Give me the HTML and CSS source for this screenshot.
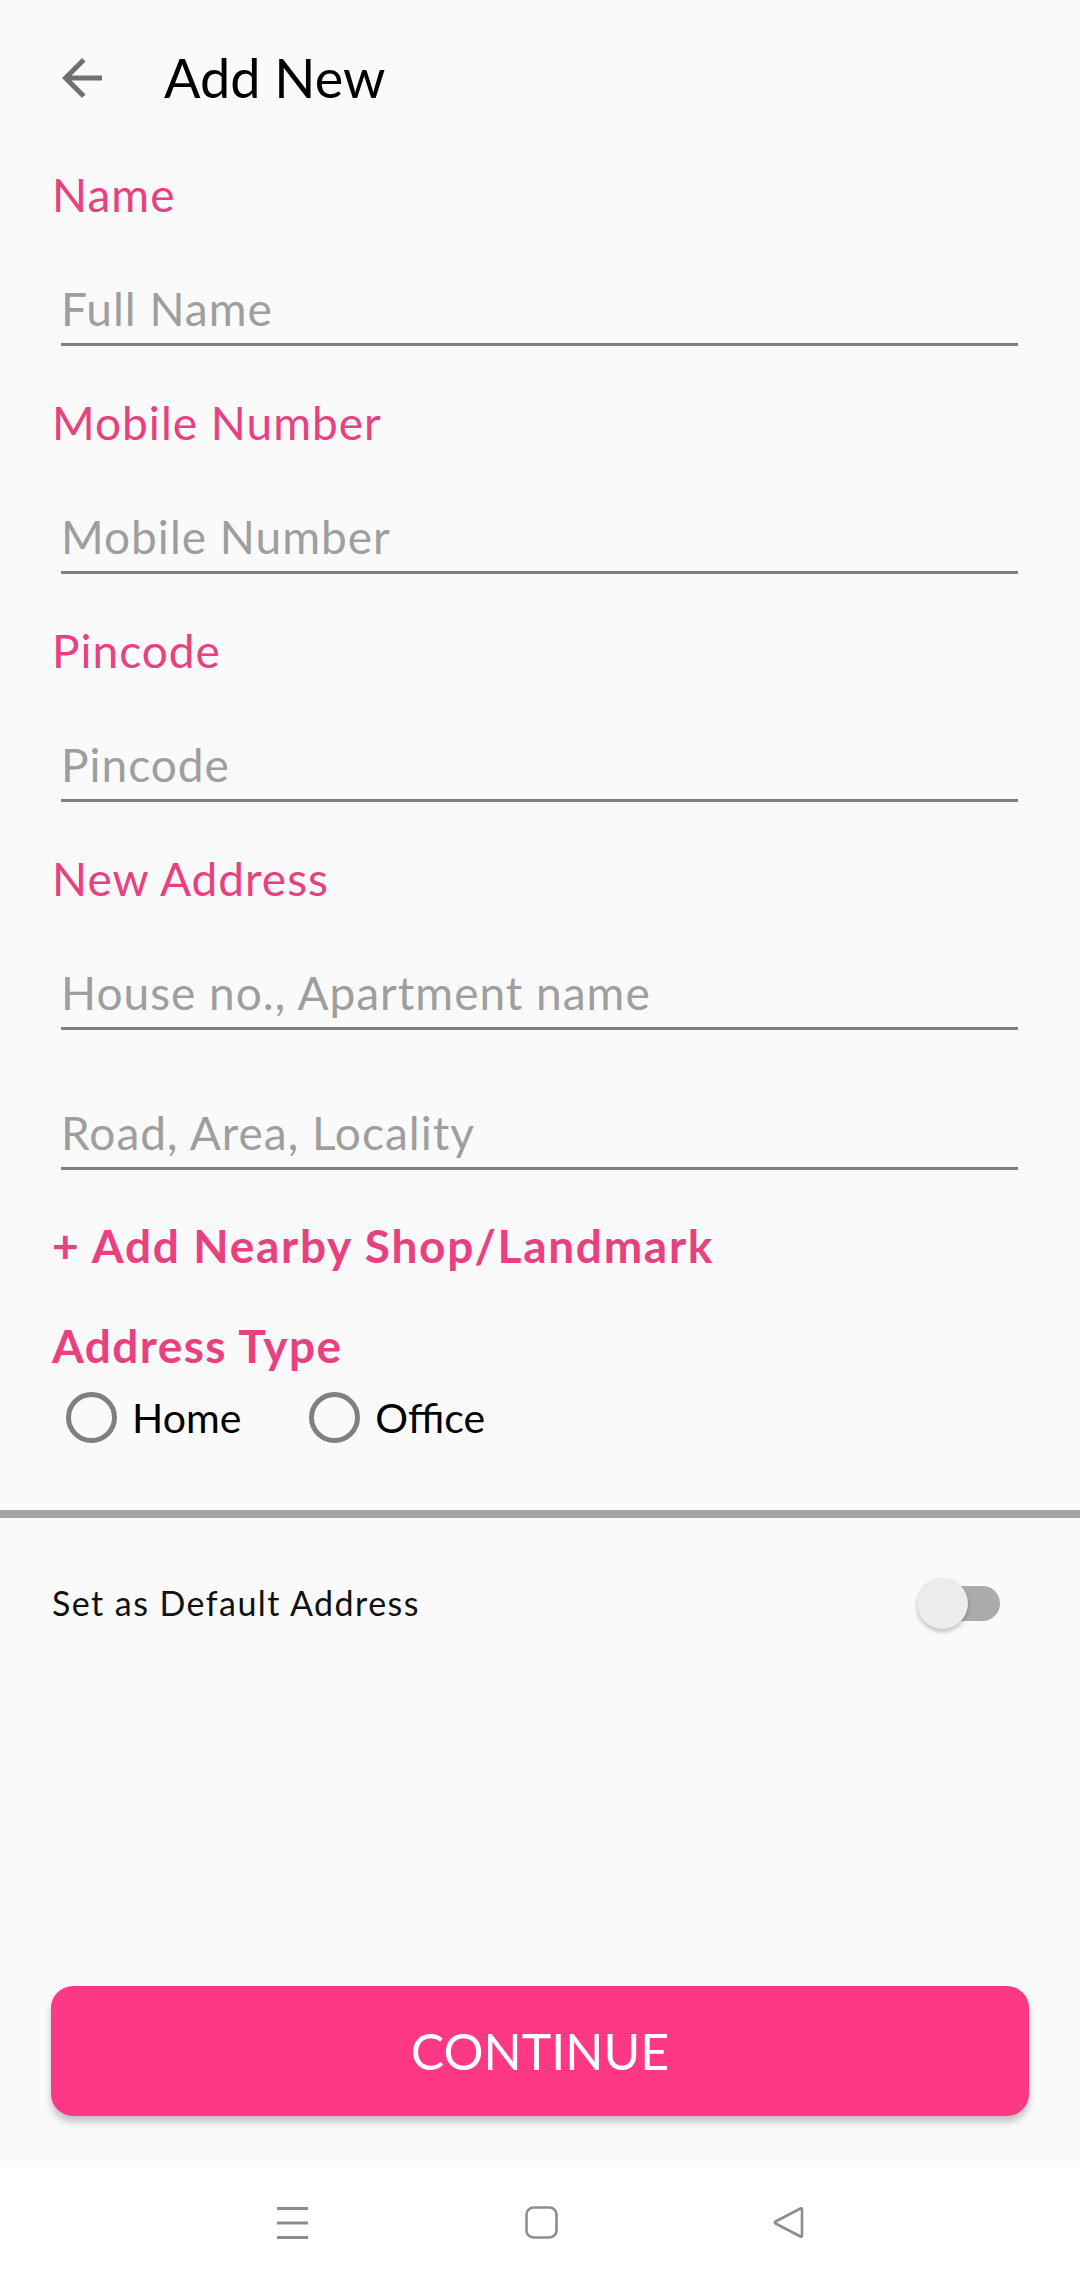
FILE: index.html
```html
<!DOCTYPE html>
<html lang="en">
<head>
<meta charset="utf-8">
<title>Add New</title>
<link rel="stylesheet" href="styles.css">
</head>
<body>
<div class="screen">
  <header class="appbar">
    <svg class="back" viewBox="0 0 24 24" aria-hidden="true"><path d="M20 11H7.830l5.59-5.59L12 4l-8 8 8 8 1.41-1.41L7.83 13H20v-2z" fill="#707070"/></svg>
    <h1 class="title">Add New</h1>
  </header>

  <form class="form">
    <label class="label" for="name">Name</label>
    <input class="field" id="name" type="text" placeholder="Full Name">

    <label class="label" for="mobile">Mobile Number</label>
    <input class="field" id="mobile" type="text" placeholder="Mobile Number">

    <label class="label" for="pin">Pincode</label>
    <input class="field" id="pin" type="text" placeholder="Pincode">

    <label class="label" for="house">New Address</label>
    <input class="field" id="house" type="text" placeholder="House no., Apartment name">
    <input class="field field-next" type="text" placeholder="Road, Area, Locality">

    <div class="landmark">+ Add Nearby Shop/Landmark</div>

    <div class="label label-strong">Address Type</div>
    <div class="radios">
      <div class="radio"><span class="circle"></span><span class="radio-text">Home</span></div>
      <div class="radio"><span class="circle"></span><span class="radio-text">Office</span></div>
    </div>
  </form>

  <div class="divider"></div>

  <div class="default-row">
    <span class="default-text">Set as Default Address</span>
    <span class="switch"><span class="track"></span><span class="thumb"></span></span>
  </div>

  <div class="spacer"></div>

  <div class="button-wrap">
    <button class="continue" type="button">CONTINUE</button>
  </div>

  <nav class="navbar">
    <svg class="nav-icon" width="31" height="32" viewBox="0 0 31 32" aria-hidden="true"><path d="M0 1.5H31M0 16H31M0 30.5H31" stroke="#8d8d8d" stroke-width="3"/></svg>
    <svg class="nav-icon" width="33" height="33" viewBox="0 0 33 33" aria-hidden="true"><rect x="1.5" y="1.5" width="30" height="30" rx="7" fill="none" stroke="#8d8d8d" stroke-width="2.6"/></svg>
    <svg class="nav-icon nav-back" width="32" height="33" viewBox="0 0 32 33" aria-hidden="true"><path d="M28.5 2.5 Q30 1.8 30 3.5 V29.5 Q30 31.2 28.5 30.5 L3.5 17.5 Q2 16.5 3.5 15.5 Z" fill="none" stroke="#8d8d8d" stroke-width="2.6" stroke-linejoin="round"/></svg>
  </nav>
</div>
</body>
</html>
```
FILE: styles.css
```css
* { box-sizing: border-box; }

html, body {
  margin: 0;
  padding: 0;
  background: #fafafa;
}

body {
  font-family: Lato, "Open Sans", "Liberation Sans", sans-serif;
}

.screen {
  width: 1080px;
  height: 2278px;
  display: flex;
  flex-direction: column;
}

.appbar {
  height: 156px;
  flex: none;
  display: flex;
  align-items: center;
  padding-left: 52px;
}

.back {
  width: 60px;
  height: 60px;
  flex: none;
}

.title {
  margin: 0 0 0 52px;
  font-size: 54px;
  line-height: 64px;
  font-weight: 400;
  color: #000;
}

.form {
  flex: none;
  margin: 0;
  padding: 11px 62px 0 52px;
  display: flex;
  flex-direction: column;
}

.label {
  display: block;
  font-size: 46px;
  line-height: 56px;
  letter-spacing: 1px;
  color: #e9407f;
  margin-top: 49px;
}

.form > .label:first-child {
  margin-top: 0;
}

.label-strong {
  font-weight: 700;
  letter-spacing: 1.4px;
  margin-top: 44px;
}

.field {
  display: block;
  width: calc(100% - 9px);
  margin: 57px 0 0 9px;
  height: 66px;
  padding: 0 0 7px 0;
  border: none;
  border-bottom: 3px solid #808080;
  background: transparent;
  font-family: inherit;
  font-size: 46px;
  line-height: 56px;
  letter-spacing: 1px;
  color: #222;
  outline: none;
}

.field::placeholder {
  color: #9e9e9e;
  opacity: 1;
}

.field-next {
  margin-top: 74px;
}

.landmark {
  margin-top: 48px;
  font-size: 46px;
  line-height: 56px;
  font-weight: 700;
  letter-spacing: 1.7px;
  color: #e9407f;
}

.radios {
  margin-top: 18px;
  padding-left: 14px;
  display: flex;
  align-items: center;
  gap: 68px;
  height: 51px;
}

.radio {
  display: flex;
  align-items: center;
  gap: 15px;
}

.circle {
  width: 51px;
  height: 51px;
  border: 5px solid #808080;
  border-radius: 50%;
  flex: none;
}

.radio-text {
  font-size: 41px;
  line-height: 51px;
  color: #000;
}

.divider {
  flex: none;
  margin-top: 67px;
  height: 8px;
  background: #a5a5a5;
}

.default-row {
  flex: none;
  height: 170px;
  padding: 0 80px 0 52px;
  display: flex;
  align-items: center;
  justify-content: space-between;
}

.default-text {
  font-size: 34px;
  line-height: 40px;
  letter-spacing: 1.45px;
  color: #111;
}

.switch {
  position: relative;
  width: 83px;
  height: 51px;
  flex: none;
}

.track {
  position: absolute;
  right: 0;
  top: 8px;
  width: 76px;
  height: 35px;
  border-radius: 18px;
  background: #ababab;
}

.thumb {
  position: absolute;
  left: 0;
  top: 0;
  width: 51px;
  height: 51px;
  border-radius: 50%;
  background: #ececec;
  box-shadow: 0 3px 4px rgba(0, 0, 0, 0.22), 0 0 1px rgba(0, 0, 0, 0.12);
}

.spacer {
  flex: 1;
}

.button-wrap {
  flex: none;
  padding: 0 51px 51px;
}

.continue {
  display: flex;
  align-items: center;
  justify-content: center;
  width: 100%;
  height: 130px;
  border: none;
  border-radius: 22px;
  background: #ff3886;
  color: #fff;
  font-family: inherit;
  font-size: 50px;
  font-weight: 400;
  box-shadow: 0 6px 7px rgba(0, 0, 0, 0.22);
}

.navbar {
  flex: none;
  height: 111px;
  background: #fff;
  display: flex;
  align-items: center;
  justify-content: center;
  gap: 217px;
}

.nav-icon {
  display: block;
}

.nav-back {
  margin-left: -3px;
}
```
